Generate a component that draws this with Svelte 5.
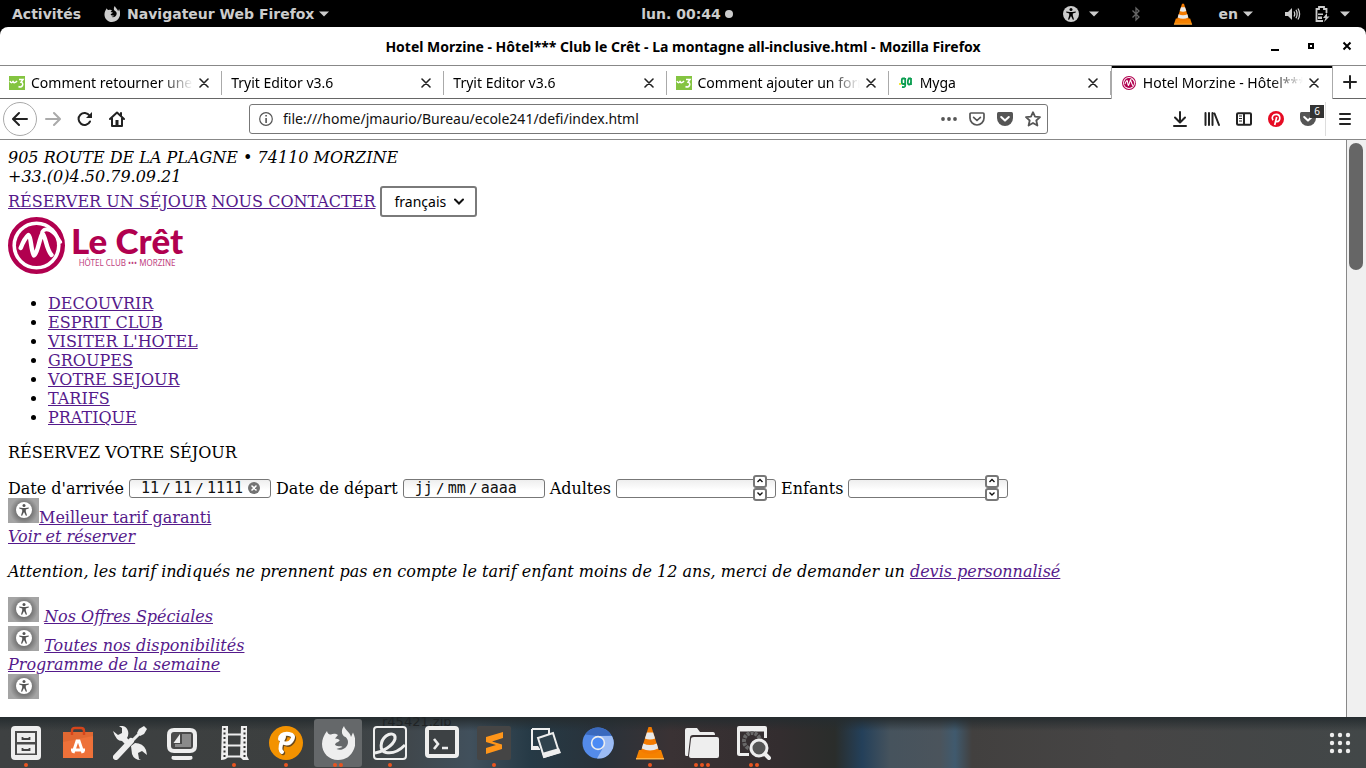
<script>
  const tabs = [
    { icon: 'w3', title: 'Comment retourner une page' },
    { icon: '', title: 'Tryit Editor v3.6' },
    { icon: '', title: 'Tryit Editor v3.6' },
    { icon: 'w3', title: 'Comment ajouter un formulaire' },
    { icon: 'myga', title: 'Myga' },
    { icon: 'hotel', title: 'Hotel Morzine - Hôtel*** Club', active: true }
  ];

  const menu = ['DECOUVRIR', 'ESPRIT CLUB', "VISITER L'HOTEL", 'GROUPES', 'VOTRE SEJOUR', 'TARIFS', 'PRATIQUE'];

  const dock = [
    { id: 'files', label: 'Fichiers', dots: 1 },
    { id: 'software', label: 'Logiciels', dots: 0 },
    { id: 'tools', label: 'Paramètres', dots: 0 },
    { id: 'screen', label: 'Machines', dots: 0 },
    { id: 'video', label: 'Vidéos', dots: 1 },
    { id: 'pencil', label: 'Peinture', dots: 1 },
    { id: 'firefox', label: 'Firefox', dots: 2 },
    { id: 'script', label: 'Éditeur', dots: 1 },
    { id: 'terminal', label: 'Terminal', dots: 0 },
    { id: 'sublime', label: 'Sublime Text', dots: 1 },
    { id: 'photos', label: 'Photos', dots: 0 },
    { id: 'chromium', label: 'Chromium', dots: 0 },
    { id: 'vlc', label: 'VLC', dots: 1 },
    { id: 'folder', label: 'Dossiers', dots: 3 },
    { id: 'viewer', label: "Visionneur d'images", dots: 2 }
  ];

  let adults = $state(null);
  let children = $state(null);
</script>

{#snippet person()}
  <circle cx="8" cy="3.6" r="1.5" />
  <path d="M3.2 5.4 L6.6 6.1 H9.4 L12.8 5.4 V6.6 L9.8 7.4 V9.4 L11 13.4 L9.9 13.8 L8 10 L6.1 13.8 L5 13.4 L6.2 9.4 V7.4 L3.2 6.6Z" />
{/snippet}

{#snippet fox()}
  <path d="M6 5C6.500 7.500 8 9 10 8.500C12 7.500 15 7.500 17 9L14 12.500C17 13 19 13.500 18.500 14.500C18 16 15 16 14 18.500C15 21 20 19.500 21.500 21C20 22 17 22 15.500 23C20 25.500 27 22 27 16C27 14 26 12 24.500 11C20 9 20 4 23 0C24 4 29 6 30 11L32 6.500C35 13 35 18 33 23C30 30 25 34 17 34C8 34 1 27 1 18C1 13 3 9 6 5Z" />
{/snippet}

{#snippet cone()}
  <path d="M6 24 H28 L31 33 H3Z" fill="#f58200" />
  <path d="M3 32 H31 V33.500 H3Z" fill="#ffb347" />
  <path d="M15.500 1 H18.500 L26 25 C22 29 12 29 8 25Z" fill="#f47b00" />
  <path d="M13.900 6.500 H20.100 L22.100 12.500 Q17 14.500 11.900 12.500Z M10.200 17.500 Q17 20.500 23.800 17.500 L25.200 22.500 Q17 26.500 8.800 22.500Z" fill="#e9e9e9" />
{/snippet}

{#snippet caret()}
  <svg class="caret" viewBox="0 0 10 6" aria-hidden="true"><path d="M0 .5H10L5 5.500Z" fill="#ccc" /></svg>
{/snippet}

{#snippet badge()}
  <span class="badge-img"><svg viewBox="0 0 16 16" aria-hidden="true"><circle cx="8" cy="8" r="8" fill="#fff" /><g fill="#555">{@render person()}</g></svg></span>
{/snippet}

{#snippet mark()}
  <circle cx="28.500" cy="28.500" r="26.300" fill="#fff" stroke="#b1004f" stroke-width="4.400" />
  <circle cx="28.500" cy="28.500" r="20.500" fill="#b1004f" />
  <path d="M12.700 31 C15 25 18 20 20.500 18 C23.500 20 22.500 33 26 38.500 C30 36 31 22 34.500 16.500 C38 20 38 32 43.500 38" fill="none" stroke="#fff" stroke-width="4.400" stroke-linecap="round" stroke-linejoin="round" />
  <path d="M34 15 C38 9 46 14 52.500 25" fill="none" stroke="#fff" stroke-width="3.400" stroke-linecap="round" />
{/snippet}

{#snippet pocket(solid)}
  {#if solid}
    <path d="M1.500 1 H14.500 Q16 1 16 2.500 V7 A8 8 0 0 1 0 7 V2.500 Q0 1 1.500 1Z" fill="#555" />
    <path d="M4.200 6 L8 9.600 L11.800 6" fill="none" stroke="#fff" stroke-width="2" stroke-linecap="round" stroke-linejoin="round" />
  {:else}
    <path d="M2 2 H14 Q15 2 15 3 V7 A7 7 0 0 1 1 7 V3 Q1 2 2 2Z M4.600 6.300 L8 9.500 L11.400 6.300" fill="none" stroke="#555" stroke-width="1.700" stroke-linecap="round" stroke-linejoin="round" />
  {/if}
{/snippet}

<div class="desktop">
  <header class="panel">
    <div class="side">
      <button class="plain">Activités</button>
      <button class="plain app-menu">
        <svg width="16" height="16" viewBox="0 0 34 34" fill="#ccc" aria-hidden="true">{@render fox()}</svg>
        Navigateur Web Firefox {@render caret()}
      </button>
    </div>
    <button class="plain clock">lun. 00:44<i></i></button>
    <div class="side right">
      <button class="plain group a11y" aria-label="Accessibilité">
        <svg width="16" height="16" viewBox="0 0 16 16" aria-hidden="true"><circle cx="8" cy="8" r="8" fill="#ccc" /><g fill="#000">{@render person()}</g></svg>
        {@render caret()}
      </button>
      <svg class="bt" width="10" height="16" viewBox="0 0 10 16" aria-hidden="true"><path d="M1.500 4.500 L8 11 L5 14 V2 L8 5 L1.500 11.500" fill="none" stroke="#666" stroke-width="1.300" /></svg>
      <svg class="cone" width="20" height="22" viewBox="2 0 30 34" aria-hidden="true">{@render cone()}</svg>
      <button class="plain lang">en {@render caret()}</button>
      <button class="plain system" aria-label="Système">
        <svg width="16" height="14" viewBox="0 0 16 14" aria-hidden="true"><path d="M0 5 H3 L7 1 V13 L3 9 H0Z" fill="#ccc" /><path d="M9 4.500 Q10.500 7 9 9.500 M11 2.800 Q13.300 7 11 11.200 M13 1.500 Q16.200 7 13 12.500" fill="none" stroke="#ccc" stroke-width="1.300" /></svg>
        <svg width="15" height="16" viewBox="0 0 15 16" aria-hidden="true"><path d="M8 15 H1.500 V3 H4 V1 H9 V3 H11.500 V7" fill="none" stroke="#ccc" stroke-width="1.800" /><path d="M3 7.500 H8 V9 H3Z M3 10.500 H7 V13 H3Z M12 7 L8 12 H10.500 L9 16 L14.500 10.500 H12Z" fill="#ccc" /></svg>
        {@render caret()}
      </button>
    </div>
  </header>

  <div class="window">
    <div class="titlebar">
      <span class="title">Hotel Morzine - Hôtel*** Club le Crêt - La montagne all-inclusive.html - Mozilla Firefox</span>
      <div class="win-buttons">
        <button aria-label="Réduire"><svg width="10" height="10" viewBox="0 0 10 10"><path d="M1 8H9V10H1Z" /></svg></button>
        <button aria-label="Agrandir"><svg width="10" height="10" viewBox="0 0 10 10"><path d="M3 3H7V7H3Z" fill="none" stroke="#000" stroke-width="2" /></svg></button>
        <button aria-label="Fermer"><svg width="10" height="10" viewBox="0 0 10 10"><path d="M1.500 1.500L8.500 8.500M8.500 1.500L1.500 8.500" stroke="#000" stroke-width="2" /></svg></button>
      </div>
    </div>

    <div class="tabs">
      {#each tabs as tab}
        <div class="tab" class:active={tab.active}>
          {#if tab.icon === 'w3'}
            <svg width="16" height="14" viewBox="0 0 16 14" aria-hidden="true"><path d="M0 0H16V14H0Z" fill="#84c441" /><path d="M1 5 Q2 8 4 5.500 Q5.500 8 8 5 M10 3.500 H14 L12 6.300 Q14.500 7 13.500 9.500 Q12 12 9.500 10.500" fill="none" stroke="#fff" stroke-width="1.500" /></svg>
          {:else if tab.icon === 'myga'}
            <svg width="16" height="16" viewBox="-1 0 16 16" aria-hidden="true"><path d="M0 9H2" stroke="#f3e63c" stroke-width="2" /><path d="M6 3.500 H3.800 Q2.800 3.500 2.800 5.500 V7 Q2.800 9 4 9 H6 M6.200 3 V11 Q6 12.500 3 12 M12 3.500 H9.800 Q8.800 5 8.800 7 Q8.800 9.500 10 9.500 Q12 9.500 12 7 V3 V10" fill="none" stroke="#0a9d50" stroke-width="1.800" /></svg>
          {:else if tab.icon === 'hotel'}
            <svg width="16" height="14" viewBox="0 0 57 57" aria-hidden="true">{@render mark()}</svg>
          {/if}
          <span class="tab-title">{tab.title}</span>
          <button class="tab-close" aria-label="Fermer l'onglet"><svg width="10" height="10" viewBox="0 0 10 10"><path d="M1 1L9 9M9 1L1 9" stroke="#222" stroke-width="1.600" stroke-linecap="round" /></svg></button>
        </div>
      {/each}
      <button class="new-tab" aria-label="Nouvel onglet"><svg width="14" height="14" viewBox="0 0 14 14"><path d="M7 1V13M1 7H13" stroke="#222" stroke-width="2" stroke-linecap="round" /></svg></button>
    </div>

    <div class="nav">
      <button class="back" aria-label="Page précédente"><svg width="16" height="16" viewBox="0 0 16 16"><path d="M15 8H1.500M7 2L1 8L7 14" class="line" /></svg></button>
      <button class="tool" aria-label="Page suivante"><svg width="16" height="16" viewBox="0 0 16 16"><path d="M1 8H14.500M9 2L15 8L9 14" class="line pale" /></svg></button>
      <button class="tool" aria-label="Actualiser"><svg width="16" height="16" viewBox="0 0 16 16"><path d="M12.500 4.500A6 6 0 1 0 13 10.500" class="line" /><path d="M15 1V7H9Z" fill="#222" /></svg></button>
      <button class="tool" aria-label="Accueil"><svg width="16" height="16" viewBox="0 0 16 16"><path d="M1 8L8 1.500L15 8M3 7V15H13V7M12 2V5" class="line" /><path d="M6.500 9H9.500V15H6.500Z" fill="#222" /></svg></button>
      <label class="url">
        <svg width="14" height="14" viewBox="0 0 14 14" aria-hidden="true"><circle cx="7" cy="7" r="6.300" fill="none" stroke="#555" stroke-width="1.200" /><path d="M6.300 3H7.900V4.600H6.300ZM6.300 6H7.900V11H6.300Z" fill="#555" /></svg>
        <input type="text" aria-label="Adresse" value="file:///home/jmaurio/Bureau/ecole241/defi/index.html" />
        <svg width="16" height="16" viewBox="0 0 16 16" fill="#555" aria-hidden="true"><circle cx="2" cy="8" r="1.900" /><circle cx="8" cy="8" r="1.900" /><circle cx="14" cy="8" r="1.900" /></svg>
        <svg width="16" height="16" viewBox="0 0 16 16" aria-hidden="true">{@render pocket(false)}</svg>
        <svg width="16" height="16" viewBox="0 0 16 16" aria-hidden="true">{@render pocket(true)}</svg>
        <svg width="16" height="16" viewBox="0 0 16 16" aria-hidden="true"><path d="M8 1.200L10 5.700L15 6.200L11.300 9.500L12.400 14.500L8 12L3.600 14.500L4.700 9.500L1 6.200L6 5.700Z" fill="none" stroke="#555" stroke-width="1.800" stroke-linejoin="round" /></svg>
      </label>
      <div class="nav-tools">
        <button class="tool" aria-label="Téléchargements"><svg width="16" height="16" viewBox="0 0 16 16"><path d="M8 1V11M3 6.500L8 11.500L13 6.500M2 15H14" class="line" /></svg></button>
        <button class="tool" aria-label="Bibliothèque"><svg width="16" height="16" viewBox="0 0 16 16"><path d="M1.500 2V14M5 2V14M8.500 2V14M10.500 2.500L15 14" class="line" /></svg></button>
        <button class="tool" aria-label="Panneau latéral"><svg width="16" height="16" viewBox="0 0 16 16"><path d="M2 2.200H14Q15 2.200 15 3.200V12.800Q15 13.800 14 13.800H2Q1 13.800 1 12.800V3.200Q1 2.200 2 2.200ZM8 2.500V13.500" class="line" /><path d="M3 5H6M3 7.500H6M3 10H6" stroke="#222" /></svg></button>
        <button class="tool" aria-label="Épingler"><svg width="16" height="16" viewBox="0 0 16 16"><circle cx="8" cy="8" r="8" fill="#e60b23" /><path d="M5 9.300C2.900 6.200 5.200 3.300 8.300 3.300C13 3.300 12.700 10.600 9 10.600C8 10.600 7.500 10 7.500 10M8.700 6L6.700 14" fill="none" stroke="#fff" stroke-width="1.700" /></svg></button>
        <button class="tool counted" aria-label="Pocket"><svg width="16" height="16" viewBox="0 0 16 16">{@render pocket(true)}</svg><span class="count">6</span></button>
        <button class="tool burger" aria-label="Menu"><svg width="14" height="14" viewBox="0 0 14 14"><path d="M2 2H12M2 7H12M2 12H12" class="line" /></svg></button>
      </div>
    </div>

    <div class="viewport">
      <main>
        <address>905 ROUTE DE LA PLAGNE • 74110 MORZINE<br />+33.(0)4.50.79.09.21</address>
        <div class="row">
          <a href="#reserver">RÉSERVER UN SÉJOUR</a>
          <a href="#contact">NOUS CONTACTER</a>
          <span class="select">
            <select aria-label="Langue"><option>français</option><option>English</option></select>
            <svg width="10" height="8" viewBox="0 0 10 8" aria-hidden="true"><path d="M1 1.500L5 5.500L9 1.500" fill="none" stroke="#111" stroke-width="2" stroke-linecap="round" /></svg>
          </span>
        </div>
        <a class="logo" href="#accueil" aria-label="Le Crêt">
          <svg width="57" height="57" viewBox="0 0 57 57" aria-hidden="true">{@render mark()}</svg>
          <span class="wordmark"><strong>Le Crêt</strong><small>HÔTEL CLUB ••• MORZINE</small></span>
        </a>
        <ul>
          {#each menu as item}<li><a href="#menu">{item}</a></li>{/each}
        </ul>
        <p>RÉSERVEZ VOTRE SÉJOUR</p>
        <form class="row booking">
          <label for="arr-day">Date d'arrivée</label>
          <span class="field date">
            <input id="arr-day" class="two" value="11" /><span>/</span><input class="two" aria-label="Mois d'arrivée" value="11" /><span>/</span><input class="four" aria-label="Année d'arrivée" value="1111" />
            <button type="button" class="clear" aria-label="Effacer"><svg width="12" height="12" viewBox="0 0 12 12"><circle cx="6" cy="6" r="6" fill="#737373" /><path d="M4 4L8 8M8 4L4 8" stroke="#fff" stroke-width="1.600" stroke-linecap="round" /></svg></button>
          </span>
          <label for="dep-day">Date de départ</label>
          <span class="field date">
            <input id="dep-day" class="two" placeholder="jj" /><span>/</span><input class="two" aria-label="Mois de départ" placeholder="mm" /><span>/</span><input class="four" aria-label="Année de départ" placeholder="aaaa" />
          </span>
          <label for="adults">Adultes</label>
          <span class="field number">
            <input id="adults" type="number" bind:value={adults} />
            <span class="spin">
              <button type="button" aria-label="Plus d'adultes" onclick={() => adults++}><svg viewBox="0 0 8 6"><path d="M1.500 4L4 1.500L6.500 4" /></svg></button>
              <button type="button" aria-label="Moins d'adultes" onclick={() => adults--}><svg viewBox="0 0 8 6"><path d="M1.500 1.500L4 4L6.500 1.500" /></svg></button>
            </span>
          </span>
          <label for="children">Enfants</label>
          <span class="field number">
            <input id="children" type="number" bind:value={children} />
            <span class="spin">
              <button type="button" aria-label="Plus d'enfants" onclick={() => children++}><svg viewBox="0 0 8 6"><path d="M1.500 4L4 1.500L6.500 4" /></svg></button>
              <button type="button" aria-label="Moins d'enfants" onclick={() => children--}><svg viewBox="0 0 8 6"><path d="M1.500 1.500L4 4L6.500 1.500" /></svg></button>
            </span>
          </span>
        </form>
        <div>{@render badge()}<a href="#tarif">Meilleur tarif garanti</a></div>
        <div><a href="#voir"><em>Voir et réserver</em></a></div>
        <p><em>Attention, les tarif indiqués ne prennent pas en compte le tarif enfant moins de 12 ans, merci de demander un <a href="#devis">devis personnalisé</a></em></p>
        <div>{@render badge()} <a href="#offres"><em>Nos Offres Spéciales</em></a></div>
        <div>{@render badge()} <a href="#dispo"><em>Toutes nos disponibilités</em></a></div>
        <div><a href="#programme"><em>Programme de la semaine</em></a></div>
        <div>{@render badge()}</div>
      </main>
      <div class="scrollbar"><div class="thumb"></div></div>
    </div>
  </div>

  <footer class="dock">
    <span class="ghost" aria-hidden="true">r45421.zip</span>
    {#each dock as app}
      <button class="launcher" class:current={app.id === 'firefox'} aria-label={app.label}>
        <svg width="34" height="34" viewBox="0 0 34 34" fill="#eee" aria-hidden="true">
          {#if app.id === 'files'}
            <rect x="2" width="30" height="34" rx="4" />
            <path d="M6 5H28V29H6Z" fill="#4a4a4a" /><path d="M8 7H26V16H8ZM8 18.500H26V27.500H8Z" />
            <path d="M13.500 11V13H20.500V11M13.500 22V24H20.500V22" fill="none" stroke="#444" stroke-width="1.800" />
          {:else if app.id === 'software'}
            <path d="M2 6H32V32H2Z" fill="#ee7139" /><path d="M2 6H32V10L2 16Z" fill="#d9622f" opacity=".6" />
            <path d="M11 9V5Q11 2 14 2H20Q23 2 23 5V9" fill="none" stroke="#d5451b" stroke-width="2.400" />
            <path d="M12 27L16 15H18L22 27M10 24H24" fill="none" stroke="#fff" stroke-width="3" />
          {:else if app.id === 'tools'}
            <path d="M3 31L18 15" stroke="#eee" stroke-width="6" stroke-linecap="round" /><path d="M16 18L28 6" stroke="#eee" stroke-width="3" />
            <path d="M26 3L31 0L34 3L31 8L27 10L24 7Z" />
            <path d="M0 5L5 9L9 7L9 2L6 0Q13 -1 15 5Q16 9 14 12L17 15L12 18L9 15Q3 15 0 5Z" />
            <path d="M18 20L22 17Q30 17 33 24L34 29L29 25L25 27L26 33L28 34Q21 34 19 28Z" />
          {:else if app.id === 'screen'}
            <path d="M9 2H25Q32 2 32 9V20Q32 27 25 27H9Q2 27 2 20V9Q2 2 9 2Z" /><path d="M9 6H25Q28 6 28 9V20Q28 23 25 23H9Q6 23 6 20V9Q6 6 9 6Z" fill="#4a4a4a" />
            <path d="M17 8H26V21H10V18H17Z" fill="#8a8a8a" /><path d="M15 8V17H8.500Z" /><path d="M7 30H27Q29 34 24 34H10Q5 34 7 30Z" />
          {:else if app.id === 'video'}
            <path d="M5 0H11V31Q9 34 4 34ZM24 0H30V30L32 34H26L23 31Z" /><path d="M10 8.500H25M10 19.500H25M9 30.500H25" stroke="#eee" stroke-width="2" />
            <path d="M7.500 2V32M27.500 2V32" stroke="#333" stroke-width="2" stroke-dasharray="2 2.500" />
          {:else if app.id === 'pencil'}
            <circle cx="17" cy="17" r="17" fill="#f39200" />
            <path d="M14 27Q11 25 14 16L16 12M12 14Q12 8 20 9Q27 10 24 15Q21 20 16 18" fill="none" stroke="#6b4a1c" stroke-width="4.500" stroke-linecap="round" />
            <path d="M13 26Q10 24 13 15L15 11M11 13Q12 7 20 8Q26 9 23 14Q20 19 15 17" fill="none" stroke="#fff" stroke-width="4" stroke-linecap="round" />
          {:else if app.id === 'firefox'}
            {@render fox()}
          {:else if app.id === 'script'}
            <rect x="1" y="1" width="32" height="32" rx="3" fill="none" stroke="#eee" stroke-width="2" />
            <path d="M2 27C9 26 20 20 22 13C23 7 17 7 13 10C7 15 6 25 13 26.500C20 28 27 24 32 19" fill="none" stroke="#eee" stroke-width="3" />
          {:else if app.id === 'terminal'}
            <rect x="2" y="2" width="30" height="28" rx="2" fill="#3d4144" stroke="#eee" stroke-width="4" />
            <path d="M9 13L13 18L9 23M17 22H23" fill="none" stroke="#eee" stroke-width="2.600" />
          {:else if app.id === 'sublime'}
            <rect width="34" height="34" rx="2" fill="#454545" />
            <path d="M9 11L26 6V12L15 15.500L25 18.500V23L9 28V22L19 19L9 16Z" fill="#ff9519" />
          {:else if app.id === 'photos'}
            <path d="M3 3H20V8M3 3V21H8" fill="none" stroke="#eee" stroke-width="2" /><path d="M2 20H9L11 23V24H2Z" />
            <path d="M9 12L24 7L30 26L15 31Z" fill="#30424d" stroke="#eee" stroke-width="2" /><path d="M13 27L30 22L32 27L15 32Z" />
          {:else if app.id === 'chromium'}
            <circle cx="17" cy="17" r="15.500" fill="#548bea" /><path d="M4 8.500A15.500 15.500 0 0 1 30.500 9.500L17 10Z" fill="#3a69bd" />
            <path d="M17 10H31A15.500 15.500 0 0 1 16 32.500L23 20Z" fill="#9cbcf5" /><circle cx="17" cy="17" r="7.200" fill="#eee" /><circle cx="17" cy="17" r="5.600" fill="#4c8bf5" />
          {:else if app.id === 'vlc'}
            {@render cone()}
          {:else if app.id === 'folder'}
            <path d="M0 4Q0 2 2 2H12L15 6H28Q30 6 30 9H8Q5 9 5 12L3 30H1Q0 30 0 28Z" /><path d="M9 11H32Q34 11 34 13V30Q34 32 32 32H6Q4 32 4 30L6 13Q6 11 9 11Z" />
          {:else}
            <path d="M12 28.500H2.500Q1.500 28.500 1.500 27.500V4H28.500V12" fill="none" stroke="#eee" stroke-width="3" /><path d="M2 0H28Q30 0 30 2V5H0V2Q0 0 2 0Z" />
            <circle cx="15" cy="15" r="8" fill="none" stroke="#686868" stroke-width="4" stroke-dasharray="3 1" />
            <circle cx="22" cy="22" r="8" fill="#555" stroke="#eee" stroke-width="3" /><path d="M28 28L32 32" stroke="#eee" stroke-width="4" stroke-linecap="round" />
          {/if}
        </svg>
        <span class="dots">{#each Array(app.dots) as _}<i></i>{/each}</span>
      </button>
    {/each}
    <button class="apps" aria-label="Applications">
      <svg width="22" height="22" viewBox="0 0 22 22" fill="#eee">
        {#each [3, 11, 19] as x}{#each [3, 11, 19] as y}<circle cx={x} cy={y} r="2.200" />{/each}{/each}
      </svg>
    </button>
  </footer>
</div>

<style>
  :global(body) { margin: 0; background: #000; }
  * { box-sizing: border-box; }
  button { border: 0; padding: 0; margin: 0; background: none; color: inherit; font: inherit; display: flex; align-items: center; justify-content: center; }
  svg { display: block; flex: none; }
  .desktop { display: flex; flex-direction: column; height: 100vh; overflow: hidden; background: #000; }

  .panel { display: flex; align-items: center; height: 27px; padding: 0 16px 0 12px; color: #ccc; font: bold 14px/20px "DejaVu Sans", sans-serif; }
  .side { flex: 1; display: flex; align-items: center; gap: 23px; }
  .side.right { justify-content: flex-end; gap: 32px; }
  .app-menu { gap: 5px; }
  .app-menu svg:first-child { margin-right: 2px; }
  .caret { width: 10px; height: 6px; }
  .clock { gap: 4px; padding-left: 12px; }
  .clock i { width: 8px; height: 8px; border-radius: 50%; background: #ccc; }
  .a11y { gap: 10px; }
  .cone { margin-right: -6px; }
  .lang { gap: 5px; }
  .system { gap: 14px; }
  .system .caret { margin-left: -4px; }

  .window { flex: 1; min-height: 0; display: flex; flex-direction: column; background: #fff; border-radius: 8px 8px 0 0; overflow: hidden; font-family: "Noto Sans", sans-serif; }
  .titlebar { flex: none; position: relative; display: flex; align-items: center; justify-content: center; height: 39px; padding-top: 2px; border-bottom: 1px solid #888; }
  .title { font-size: 14px; line-height: 20px; font-weight: bold; }
  .win-buttons { position: absolute; right: 14px; top: 14px; display: flex; gap: 26px; }

  .tabs { flex: none; display: grid; grid-template-columns: repeat(6, minmax(0, 1fr)) 33px; height: 33px; font-size: 14px; }
  .tab { min-width: 0; display: flex; align-items: center; gap: 6px; padding: 1px 13px 0 9px; border-bottom: 1px solid #666; background: linear-gradient(#aaa, #aaa) right 5px / 1px 24px no-repeat; }
  .tab.active { border: solid #aaa; border-width: 0 1px; padding-bottom: 1px; background: #fff; box-shadow: inset 0 2px #000; }
  .tab-title { flex: 1; min-width: 0; white-space: nowrap; overflow: hidden; line-height: 20px; mask-image: linear-gradient(to left, transparent, #000 32px); }
  .new-tab { border-bottom: 1px solid #666; }

  .nav { flex: none; display: flex; align-items: center; height: 41px; padding: 0 3px; border-bottom: 1px solid #888; }
  .line { fill: none; stroke: #222; stroke-width: 2; stroke-linecap: round; stroke-linejoin: round; }
  .pale { stroke: #aaa; }
  .back { width: 34px; height: 34px; border: 1px solid #aaa; border-radius: 50%; }
  .tool { width: 32px; height: 34px; }
  .url { flex: 1; min-width: 0; display: flex; align-items: center; gap: 12px; height: 30px; margin: 0 0 0 116px; padding: 0 6px 0 9px; border: 1px solid #777; border-radius: 3px; }
  .url input { flex: 1; min-width: 0; margin-left: -2px; padding: 0; border: 0; outline: 0; background: none; color: #111; font: 14px/20px "Noto Sans", sans-serif; }
  .nav-tools { display: flex; margin-left: 116px; }
  .counted { position: relative; }
  .count { position: absolute; right: 0; top: 3px; width: 14px; height: 13px; background: #333; color: #fff; font-size: 10px; line-height: 13px; text-align: center; }
  .burger { width: 38px; margin-left: 1px; border-left: 1px solid #ddd; }

  .viewport { flex: 1; min-height: 0; display: flex; }
  main { flex: 1; min-width: 0; padding: 8px; overflow: hidden; color: #000; font: 16px/19px "DejaVu Serif", serif; }
  main a { color: #551a8b; }
  .row { display: flex; align-items: center; gap: 5px; }
  .select { position: relative; display: flex; }
  select { appearance: none; height: 31px; padding: 0 29px 0 12px; border: 2px solid #7a7a7a; border-radius: 3px; background: #fff; color: #000; font: 14px/20px "Noto Sans", sans-serif; }
  .select svg { position: absolute; right: 13px; top: 12px; pointer-events: none; }
  .logo { display: flex; gap: 6px; width: max-content; padding-bottom: 4px; text-decoration: none; }
  .wordmark { display: flex; flex-direction: column; align-items: center; padding-top: 5px; color: #b1004f; font-family: Lato, sans-serif; }
  .wordmark strong { font-size: 35px; line-height: 37px; font-weight: 900; }
  .wordmark small { font: 8px/8px "Noto Sans", sans-serif; color: #c04080; }
  ul { margin: 16px 0; padding-left: 40px; }
  p { margin: 16px 0; }

  .booking { height: 20px; }
  .field { position: relative; display: flex; align-items: center; height: 19px; border: 1px solid #777; border-radius: 3px; background: linear-gradient(#eee, #fff 60%); }
  .field input { padding: 0; border: 0; outline: 0; background: none; color: #111; font: 15px/17px "DejaVu Sans Mono", monospace; }
  .field input::placeholder { color: #111; opacity: 1; }
  .date { width: 142px; padding-left: 11px; }
  .date span { width: 15px; text-align: center; font: 14px/17px "DejaVu Sans Mono", monospace; }
  .two { width: 18px; }
  .four { width: 36px; }
  .clear { margin-left: 5px; }
  .number { width: 160px; }
  .number input { width: 130px; appearance: textfield; }
  .spin { position: absolute; right: 8px; top: -5px; display: flex; flex-direction: column; }
  .spin button { width: 14px; height: 13px; border: 2px solid #777; border-radius: 3px; background: #fff; }
  .spin svg { width: 8px; height: 6px; fill: none; stroke: #111; stroke-width: 1.4; }
  .badge-img { display: inline-block; width: 31px; height: 25px; padding: 4px 7px 5px 8px; background: radial-gradient(circle at 16px 13px, #777 8px, #a4a4a4 14px); vertical-align: baseline; }
  .badge-img svg { width: 16px; height: 16px; }

  .scrollbar { width: 20px; padding: 3px 3px 0 2px; border-left: 1px solid #888; background: #f0f0f0; }
  .thumb { height: 127px; width: 14px; border-radius: 7px; background: #666; }

  .dock { flex: none; position: relative; display: flex; align-items: flex-start; height: 51px; padding: 2px 15px 0 0; background:
    linear-gradient(#252c2f 0, transparent 14px),
    linear-gradient(90deg, #3e4142 0, #3c3f3f 300px, #40464a 400px, #41505c 470px, #263a46 530px, #29323a 600px, #3a3234 670px, #332d2f 780px, #2a2d2b 835px, #24405a 862px, #46535d 890px, #4b545c 940px, #405a6e 955px, #42403f 972px, #464545 1120px, #424748 1366px); }
  .ghost { position: absolute; left: 382px; top: -5px; color: #202426; font: 13px/20px "DejaVu Sans", sans-serif; clip-path: inset(5px 0 0 0); }
  .launcher { position: relative; flex-direction: column; width: 48px; height: 48px; margin: 0 2px; border-radius: 3px; }
  .current { background: #65686a; }
  .dots { position: absolute; left: 0; right: 0; bottom: 0; display: flex; justify-content: center; gap: 2px; }
  .dots i { width: 4px; height: 4px; border-radius: 50%; background: #e95420; }
  .apps { margin: 13px 0 0 auto; }
</style>
